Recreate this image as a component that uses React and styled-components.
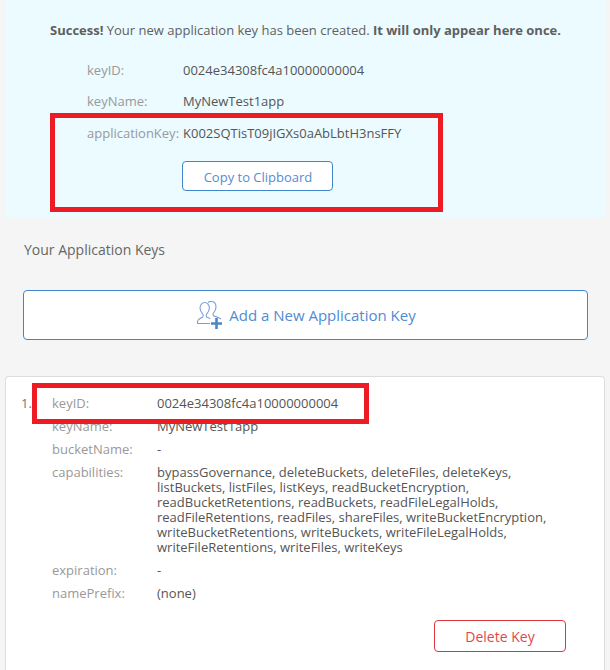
import styled, { createGlobalStyle } from 'styled-components'

const GlobalStyle = createGlobalStyle`
  html, body {
    margin: 0;
    padding: 0;
    background: #f5f5f5;
    height: 670px;
    overflow: hidden;
  }
  body {
    font-family: "Open Sans", "Noto Sans", sans-serif;
    font-size: 13px;
    color: #555;
  }
`

const Page = styled.div`
  position: relative;
  width: 610px;
  height: 670px;
  overflow: hidden;
`

const SuccessPanel = styled.section`
  margin: 0 5px;
  height: 217px;
  box-sizing: border-box;
  padding: 21px 0 0 45px;
  background: #ebfbff;
`

const Notice = styled.p`
  margin: 0 0 14.6px;
  font-size: 13px;
  line-height: 18px;
  color: #5f5f5f;

  b {
    font-weight: 700;
  }
`

const NewKeyRow = styled.div`
  display: grid;
  grid-template-columns: 96px 1fr;
  padding-left: 37px;
  height: 31.5px;
  line-height: 32px;
`

const NewKeyLabel = styled.span`
  color: #999;
  white-space: nowrap;
`

const NewKeyValue = styled.span`
  color: #555;
  white-space: nowrap;
`

const CopyButton = styled.button`
  display: block;
  box-sizing: border-box;
  width: 151px;
  height: 30px;
  margin: 13.4px 0 0 132px;
  padding: 2px 0 0 1px;
  background: #fff;
  border: 1px solid #3f86cc;
  border-radius: 4px;
  color: #5b8bd0;
  font: 13px "Open Sans", sans-serif;
`

const KeysHeading = styled.h2`
  margin: 23px 0 31px 24px;
  font-size: 14px;
  line-height: 19px;
  font-weight: 400;
  color: #666;
`

const AddButton = styled.button`
  display: flex;
  align-items: center;
  justify-content: center;
  gap: 7px;
  box-sizing: border-box;
  width: 565px;
  height: 50px;
  margin: 0 0 36px 23px;
  padding: 0;
  background: #fff;
  border: 1px solid #3f86cc;
  border-radius: 4px;
  color: #4f8bd3;
  font: 15px "Open Sans", sans-serif;
`

const KeyCard = styled.section`
  position: relative;
  box-sizing: border-box;
  margin: 0 5px;
  height: 320px;
  padding: 17px 0 0 46px;
  background: #fff;
  border: 1px solid #ddd;
  border-bottom: 0;
  border-radius: 4px 4px 0 0;
`

const KeyIndex = styled.span`
  position: absolute;
  left: 15px;
  top: 17px;
  line-height: 18px;
  color: #777;
`

const KeyRow = styled.div`
  display: grid;
  grid-template-columns: 105px 1fr;
  padding-top: ${props => (props.$wrap ? '2px' : '0')};
  margin-bottom: ${props => (props.$wrap ? '6px' : '5px')};
  line-height: ${props => (props.$wrap ? '15px' : '18px')};
`

const KeyLabel = styled.span`
  color: #999;
`

const KeyValue = styled.span`
  color: #555;
  width: 400px;
`

const CardActions = styled.div`
  display: flex;
  justify-content: flex-end;
  padding: 13px 38px 0 0;
`

const DeleteButton = styled.button`
  box-sizing: border-box;
  width: 132px;
  height: 32px;
  padding: 0;
  background: #fff;
  border: 1px solid #d9363e;
  border-radius: 4px;
  color: #e0474c;
  font: 14px "Open Sans", sans-serif;
`

const Callout = styled.div`
  position: absolute;
  box-sizing: border-box;
  border: 5px solid #ed1c24;
  left: ${props => props.$x}px;
  top: ${props => props.$y}px;
  width: ${props => props.$w}px;
  height: ${props => props.$h}px;
`

function AddKeyIcon() {
  return (
    <svg width="27" height="28" viewBox="0 0 27 28" fill="none">
      <path
        d="M15 22.500H2.500v-1.800c0-2.200 2.700-3.500 5.300-4.700.6-1 .5-2.300-.3-3.300C6.100 11 5 9 5 7c0-3.200 2.200-5.500 4.700-5.500S14.400 3.800 14.400 7c0 2-1 4-2.500 5.700-.8 1-.9 2.300-.3 3.300 1.200.5 2.400 1 3.600 1.600"
        stroke="#7d9fd8"
        strokeWidth="1.100"
      />
      <path
        d="M13 1.500C13.800.8 14.800.5 16 .5c3 0 5 2.300 5 5.500 0 2-.9 4-2.200 5.500-.8 1-.9 2.300-.3 3.300 2.800 1 5.500 1.700 7.500 3.200"
        stroke="#7d9fd8"
        strokeWidth="1.100"
      />
      <path d="M21.500 17v11M16 22.500h11" stroke="#4a86c8" strokeWidth="2.600" />
    </svg>
  )
}

export default function App() {
  return (
    <Page>
      <GlobalStyle />
      <SuccessPanel>
        <Notice>
          <b>Success!</b> Your new application key has been created. <b>It will only appear here once.</b>
        </Notice>
        <NewKeyRow>
          <NewKeyLabel>keyID:</NewKeyLabel>
          <NewKeyValue>0024e34308fc4a10000000004</NewKeyValue>
        </NewKeyRow>
        <NewKeyRow>
          <NewKeyLabel>keyName:</NewKeyLabel>
          <NewKeyValue>MyNewTest1app</NewKeyValue>
        </NewKeyRow>
        <NewKeyRow>
          <NewKeyLabel>applicationKey:</NewKeyLabel>
          <NewKeyValue>K002SQTisT09jIGXs0aAbLbtH3nsFFY</NewKeyValue>
        </NewKeyRow>
        <CopyButton>Copy to Clipboard</CopyButton>
      </SuccessPanel>

      <KeysHeading>Your Application Keys</KeysHeading>
      <AddButton>
        <AddKeyIcon />
        Add a New Application Key
      </AddButton>

      <KeyCard>
        <KeyIndex>1.</KeyIndex>
        <KeyRow>
          <KeyLabel>keyID:</KeyLabel>
          <KeyValue>0024e34308fc4a10000000004</KeyValue>
        </KeyRow>
        <KeyRow>
          <KeyLabel>keyName:</KeyLabel>
          <KeyValue>MyNewTest1app</KeyValue>
        </KeyRow>
        <KeyRow>
          <KeyLabel>bucketName:</KeyLabel>
          <KeyValue>-</KeyValue>
        </KeyRow>
        <KeyRow $wrap>
          <KeyLabel>capabilities:</KeyLabel>
          <KeyValue>
            bypassGovernance, deleteBuckets, deleteFiles, deleteKeys, listBuckets, listFiles, listKeys,
            readBucketEncryption, readBucketRetentions, readBuckets, readFileLegalHolds, readFileRetentions,
            readFiles, shareFiles, writeBucketEncryption, writeBucketRetentions, writeBuckets,
            writeFileLegalHolds, writeFileRetentions, writeFiles, writeKeys
          </KeyValue>
        </KeyRow>
        <KeyRow>
          <KeyLabel>expiration:</KeyLabel>
          <KeyValue>-</KeyValue>
        </KeyRow>
        <KeyRow>
          <KeyLabel>namePrefix:</KeyLabel>
          <KeyValue>(none)</KeyValue>
        </KeyRow>
        <CardActions>
          <DeleteButton>Delete Key</DeleteButton>
        </CardActions>
      </KeyCard>

      <Callout $x={50} $y={113} $w={393} $h={99} />
      <Callout $x={32} $y={383} $w={337} $h={41} />
    </Page>
  )
}
